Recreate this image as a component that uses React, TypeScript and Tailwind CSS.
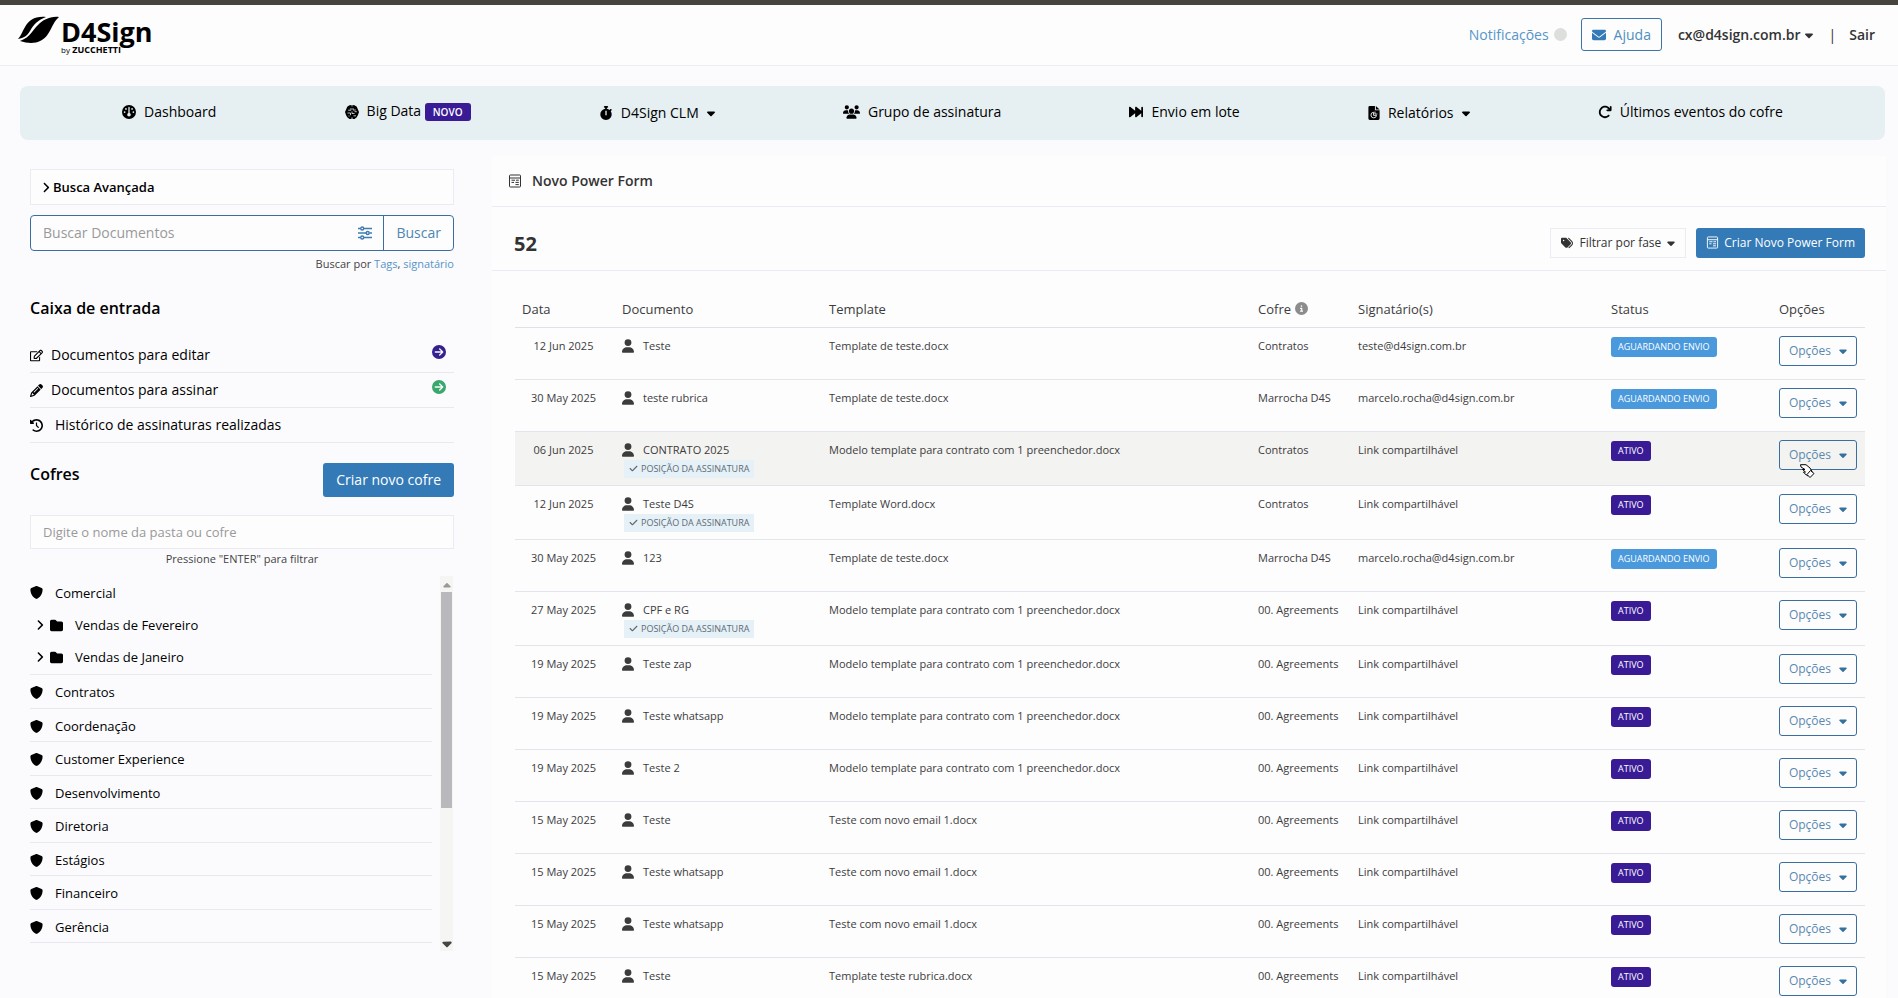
import { clsx } from "clsx";
import type { ReactNode } from "react";
import {
  FaAngleRight,
  FaArrowRotateRight,
  FaCaretDown,
  FaCheck,
  FaCircleArrowRight,
  FaCircleInfo,
  FaClockRotateLeft,
  FaEnvelope,
  FaFolder,
  FaForwardFast,
  FaGauge,
  FaPencil,
  FaShield,
  FaStopwatch,
  FaTags,
  FaUser,
  FaUsers,
} from "react-icons/fa6";
import { FaRegEdit } from "react-icons/fa";

type Row = {
  date: string;
  name: string;
  template: string;
  vault: string;
  signer: string;
  active: boolean;
  position?: boolean;
};

const MODEL = "Modelo template para contrato com 1 preenchedor.docx";
const LINK = "Link compartilhável";

const rows: Row[] = [
  { date: "12 Jun 2025", name: "Teste", template: "Template de teste.docx", vault: "Contratos", signer: "teste@d4sign.com.br", active: false },
  { date: "30 May 2025", name: "teste rubrica", template: "Template de teste.docx", vault: "Marrocha D4S", signer: "marcelo.rocha@d4sign.com.br", active: false },
  { date: "06 Jun 2025", name: "CONTRATO 2025", template: MODEL, vault: "Contratos", signer: LINK, active: true, position: true },
  { date: "12 Jun 2025", name: "Teste D4S", template: "Template Word.docx", vault: "Contratos", signer: LINK, active: true, position: true },
  { date: "30 May 2025", name: "123", template: "Template de teste.docx", vault: "Marrocha D4S", signer: "marcelo.rocha@d4sign.com.br", active: false },
  { date: "27 May 2025", name: "CPF e RG", template: MODEL, vault: "00. Agreements", signer: LINK, active: true, position: true },
  { date: "19 May 2025", name: "Teste zap", template: MODEL, vault: "00. Agreements", signer: LINK, active: true },
  { date: "19 May 2025", name: "Teste whatsapp", template: MODEL, vault: "00. Agreements", signer: LINK, active: true },
  { date: "19 May 2025", name: "Teste 2", template: MODEL, vault: "00. Agreements", signer: LINK, active: true },
  { date: "15 May 2025", name: "Teste", template: "Teste com novo email 1.docx", vault: "00. Agreements", signer: LINK, active: true },
  { date: "15 May 2025", name: "Teste whatsapp", template: "Teste com novo email 1.docx", vault: "00. Agreements", signer: LINK, active: true },
  { date: "15 May 2025", name: "Teste whatsapp", template: "Teste com novo email 1.docx", vault: "00. Agreements", signer: LINK, active: true },
  { date: "15 May 2025", name: "Teste", template: "Template teste rubrica.docx", vault: "00. Agreements", signer: LINK, active: true },
];

const vaults = [
  "Contratos",
  "Coordenação",
  "Customer Experience",
  "Desenvolvimento",
  "Diretoria",
  "Estágios",
  "Financeiro",
  "Gerência",
];

function FormIcon({ className }: { className?: string }) {
  return (
    <svg viewBox="0 0 14 14" fill="none" stroke="currentColor" className={className}>
      <rect x="1.5" y="1" width="11" height="12" rx="0.8" />
      <path d="M1.5 4H12.5M3.5 6.2H7M8 6.2H10.8M3.5 8.4H6M7.5 8.4H10.8M7.5 10.6H10.8" />
    </svg>
  );
}

function ReportIcon({ className }: { className?: string }) {
  return (
    <svg viewBox="0 0 12 15" className={className}>
      <path
        fill="currentColor"
        d="M1.5 0H7v4.5h5v9a1.5 1.5 0 0 1-1.5 1.5h-9A1.5 1.5 0 0 1 0 13.500v-12A1.5 1.5 0 0 1 1.500 0ZM8 0l4 3.700H8Z"
      />
      <path d="M5.5 6.7a3 3 0 1 0 3.2 3.3H5.5Z" fill="none" stroke="#e6eff1" />
      <path d="M7 6v2.6h2.6" fill="none" stroke="#e6eff1" />
    </svg>
  );
}

function BrainIcon({ className }: { className?: string }) {
  return (
    <svg viewBox="0 0 14 14" className={className}>
      <path
        fill="currentColor"
        d="M4.5 0.2L6.600 0V1.500H7.400V0L9.500 0.200L11.800 1.700L12.700 4L14 7L12.900 10.200L11.500 12.500L9.500 13.900H7.500V12.500H6.500V13.900H4.500L2.500 12.500L1.100 10.200L0 7L1.300 4L2.200 1.700Z"
      />
      <path
        fill="none"
        stroke="#e6eff1"
        strokeWidth="0.8"
        d="M3.200 5.200H6V3M8 3V5H10.800M2.500 8H5.500V10.200M7 6.500V8.500H9.500M8.500 10.800H11M3.500 11H4.500M9.500 6.700H11.800"
      />
    </svg>
  );
}

function Logo() {
  return (
    <a href="#" className="flex items-start gap-[2px] text-black">
      <svg viewBox="0 0 41 28" className="w-[41px] h-7" fill="currentColor">
        <path d="M28 1C17 0 11 4 7 11C4 16 3 20 0 23C6 22 9 20 12 15C16 8 20 4 28 1Z" />
        <path d="M41 1C32 0 25 4 20 9C15 13 13 21 2 25C14 29 24 27 30 18C34 12 36 5 41 1Z" />
      </svg>
      <span className="flex flex-col font-bold">
        <span className="text-[27px] leading-8">D4Sign</span>
        <span className="text-[9px] leading-[4px]">
          <span className="font-normal text-[8px]">by</span> ZUCCHETTI
        </span>
      </span>
    </a>
  );
}

function NavItem({ icon, dropdown, children }: { icon: ReactNode; dropdown?: boolean; children: ReactNode }) {
  return (
    <a
      href="#"
      className={clsx("flex items-center gap-2 text-black whitespace-nowrap", !dropdown && "pb-[3px]")}
    >
      {icon}
      {children}
      {dropdown && <FaCaretDown className="w-2" />}
    </a>
  );
}

function Header() {
  return (
    <header className="flex items-start justify-between h-[60px] border-t-[5px] border-b border-t-[#47443e] border-b-[#ebebf3] bg-[#fdfdfe] pl-[18px] pr-[23px] box-content">
      <div className="pt-[11px]">
        <Logo />
      </div>
      <div className="flex items-center pt-[13px] text-[#333]">
        <a href="#" className="text-[#5695c7]">
          Notificações
        </a>
        <span className="w-[13px] h-[13px] ml-[5px] mr-[14px] rounded-full bg-[#dcdfdc]" />
        <button className="flex items-center gap-2 h-[33px] px-[10px] rounded-[3px] border border-[#3b74a5] text-[#4f8fc0]">
          <FaEnvelope className="text-[#337ab7]" />
          Ajuda
        </button>
        <button className="flex items-center gap-1 ml-4 font-semibold">
          cx@d4sign.com.br
          <FaCaretDown className="w-2" />
        </button>
        <span className="ml-4 mr-[13px]">|</span>
        <a href="#" className="font-semibold">
          Sair
        </a>
      </div>
    </header>
  );
}

function Nav() {
  return (
    <nav className="flex justify-around items-center mt-5 ml-5 mr-[13px] px-[38px] h-[54px] rounded-lg bg-[#e6eff1]">
      <NavItem icon={<FaGauge />}>Dashboard</NavItem>
      <NavItem icon={<BrainIcon className="w-[14px] h-[14px]" />}>
        <span>
          Big Data{" "}
          <span className="px-2 py-[2px] rounded-[3px] bg-[#3a1b96] text-white text-[10px] font-semibold">NOVO</span>
        </span>
      </NavItem>
      <NavItem icon={<FaStopwatch />} dropdown>
        D4Sign CLM
      </NavItem>
      <NavItem icon={<FaUsers className="w-[17px] h-[14px]" />}>Grupo de assinatura</NavItem>
      <NavItem icon={<FaForwardFast />}>Envio em lote</NavItem>
      <NavItem icon={<ReportIcon className="w-3 h-[14px]" />} dropdown>
        Relatórios
      </NavItem>
      <NavItem icon={<FaArrowRotateRight />}>Últimos eventos do cofre</NavItem>
    </nav>
  );
}

function VaultItem({ name }: { name: string }) {
  return (
    <a href="#" className="flex items-center gap-3 pt-2 pb-[5px] border-b border-[#e8e8ee] leading-normal">
      <FaShield className="text-[13px]" />
      {name}
    </a>
  );
}

function FolderItem({ name }: { name: string }) {
  return (
    <a href="#" className="flex items-center h-8 pl-[6px]">
      <FaAngleRight className="text-[14px] w-2" />
      <FaFolder className="ml-[6px] mr-3 text-[13px]" />
      {name}
    </a>
  );
}

function Sidebar() {
  return (
    <aside className="w-[424px] shrink-0 text-black">
      <button className="flex items-center w-full h-[36px] px-[11px] gap-[3px] border border-[#ebebf3] bg-[#fdfdfe] text-[13px] font-semibold">
        <FaAngleRight className="w-2 text-[15px]" />
        Busca Avançada
      </button>
      <div className="flex h-9 mt-[10px] rounded-[4px] border border-[#3b6ea0] bg-[#fdfdfe]">
        <input
          aria-label="Buscar Documentos"
          placeholder="Buscar Documentos"
          className="flex-1 min-w-0 px-3 outline-none placeholder:text-[#999]"
        />
        <button aria-label="Filtros" className="px-[11px] text-[#3f7db0]">
          <svg viewBox="0 0 14 14" className="w-[14px] h-[14px]" fill="none" stroke="currentColor" strokeWidth="1.4">
            <path d="M0 2.5H2.5M6 2.5H14M0 7H8M11.5 7H14M0 11.5H2.5M6 11.5H14" />
            <circle cx="4.2" cy="2.5" r="1.5" />
            <circle cx="9.7" cy="7" r="1.5" />
            <circle cx="4.2" cy="11.5" r="1.5" />
          </svg>
        </button>
        <button className="px-3 border-l border-[#3b6ea0] text-[#4f86b0]">Buscar</button>
      </div>
      <p className="mt-1 text-right text-[11px] text-[#444] leading-[18px]">
        Buscar por{" "}
        <a href="#" className="text-[#5695c7]">
          Tags
        </a>
        ,{" "}
        <a href="#" className="text-[#5695c7]">
          signatário
        </a>
      </p>

      <h2 className="mt-[25px] mb-5 text-[16px] leading-5 font-semibold">Caixa de entrada</h2>
      <a href="#" className="flex items-center gap-2 h-[35px] border-b border-[#e8e8ee]">
        <FaRegEdit className="text-[13px]" />
        Documentos para editar
        <FaCircleArrowRight className="ml-auto mr-2 mb-[6px] text-[#35208f]" />
      </a>
      <a href="#" className="flex items-center gap-2 h-[35px] border-b border-[#e8e8ee]">
        <FaPencil className="text-[13px]" />
        Documentos para assinar
        <FaCircleArrowRight className="ml-auto mr-2 mb-[6px] text-[#3aa76d]" />
      </a>
      <a href="#" className="flex items-center gap-3 h-[35px] border-b border-[#e8e8ee]">
        <FaClockRotateLeft className="text-[13px]" />
        Histórico de assinaturas realizadas
      </a>

      <div className="flex justify-between items-start mt-5">
        <h2 className="text-[16px] leading-[22px] font-semibold">Cofres</h2>
        <button className="h-[34px] px-[13px] rounded-[3px] bg-[#337ab7] text-white">Criar novo cofre</button>
      </div>
      <input
        aria-label="Digite o nome da pasta ou cofre"
        placeholder="Digite o nome da pasta ou cofre"
        className="w-full h-[34px] mt-[18px] px-3 border border-[#ebebf3] bg-[#fdfdfe] text-[13px] outline-none placeholder:text-[#999]"
      />
      <p className="text-center text-[11px] leading-5 text-[#444]">Pressione "ENTER" para filtrar</p>

      <div className="flex mt-[7px] text-[13px]">
        <div className="flex-1 mr-2 pb-2">
          <a href="#" className="flex items-center gap-3 h-[33px]">
            <FaShield className="text-[13px]" />
            Comercial
          </a>
          <div className="pb-[1px] border-b border-[#e8e8ee]">
            <FolderItem name="Vendas de Fevereiro" />
            <FolderItem name="Vendas de Janeiro" />
          </div>
          {vaults.map((name) => (
            <VaultItem key={name} name={name} />
          ))}
        </div>
        <div className="flex flex-col items-center w-[13px] mr-[1px] bg-[#f5f5f3] text-[10px]">
          <FaCaretDown className="mt-1 rotate-180 h-3 text-[#999]" />
          <div className="w-[11px] h-[216px] bg-[#b8b8bd]" />
          <FaCaretDown className="mt-auto h-[15px] text-[#444]" />
        </div>
      </div>
    </aside>
  );
}

function FormTable() {
  return (
    <table className="w-full table-fixed text-[11px] text-[#3c3c3c]">
      <thead>
        <tr className="h-9 border-b border-[#e0e0e8] text-left text-[13px]">
          <th className="w-[99px] px-[7px] font-normal">Data</th>
          <th className="w-[207px] px-2 font-normal">Documento</th>
          <th className="px-2 font-normal">Template</th>
          <th className="w-[100px] px-2 font-normal">
            <span className="flex items-center gap-1">
              Cofre <FaCircleInfo className="text-[#8c8c8c]" />
            </span>
          </th>
          <th className="w-[253px] px-2 font-normal">Signatário(s)</th>
          <th className="w-[168px] px-2 font-normal">Status</th>
          <th className="w-[94px] px-2 font-normal">Opções</th>
        </tr>
      </thead>
      <tbody>
        {rows.map((row, index) => (
          <tr
            key={index}
            className={clsx(
              "border-b border-[#e4e4ec] align-top leading-5",
              row.position ? "h-[54px]" : "h-[52px]",
              index === 2 && "bg-[#f3f3f1]"
            )}
          >
            <td className="pl-[7px] pr-[9px] pt-2 text-center">{row.date}</td>
            <td className="px-2 pt-2">
              <span className="flex items-center gap-[9px]">
                <FaUser className="w-3 h-[14px]" />
                {row.name}
              </span>
              {row.position && (
                <span className="flex items-center w-max h-[18px] ml-[2px] px-[5px] gap-[3px] bg-[#e6f0f7] text-[9px] font-medium text-[#5b6a75]">
                  <FaCheck /> POSIÇÃO DA ASSINATURA
                </span>
              )}
            </td>
            <td className="px-2 pt-2">{row.template}</td>
            <td className="px-2 pt-2 whitespace-nowrap">{row.vault}</td>
            <td className="px-2 pt-2">{row.signer}</td>
            <td className="px-2 pt-2">
              <span
                className={clsx(
                  "inline-block h-5 px-[7px] rounded-[3px] text-[9px] font-medium text-white",
                  row.active ? "bg-[#3a1b96]" : "bg-[#4a99dd]"
                )}
              >
                {row.active ? "ATIVO" : "AGUARDANDO ENVIO"}
              </span>
            </td>
            <td className="px-2 pt-2">
              <div className="relative">
                <button className="flex items-center justify-center gap-2 w-full h-[30px] rounded-[3px] border border-[#3b6ea0] text-[12px] text-[#5a89b0]">
                  Opções
                  <FaCaretDown className="w-2 text-[#35719f]" />
                </button>
                {index === 2 && <HandCursor />}
              </div>
            </td>
          </tr>
        ))}
      </tbody>
    </table>
  );
}

function HandCursor() {
  return (
    <svg viewBox="0 0 16 14" className="absolute left-5 top-[24px] w-4 h-[14px]" fill="#fff" stroke="#000">
      <path d="M1.5 .7H7L11 4L13 7.5L9 12L5.5 9.5L4.5 8H6.5L3.5 5.5H6L2 3Z" />
      <path d="M11.5 6.5L15 9.5L11 13.5L8 10.5Z" />
    </svg>
  );
}

function Main() {
  return (
    <main className="flex-1 min-w-0 bg-[#fdfdfe] text-[#333]">
      <div className="flex items-center gap-[10px] h-[51px] px-4 border-b border-[#ebebf3]">
        <FormIcon className="w-[14px] h-[14px]" />
        <h1 className="font-semibold">Novo Power Form</h1>
      </div>
      <div className="flex items-center h-16 pt-2 pl-[22px] pr-[21px] border-b border-[#ebebf3] text-[12px]">
        <span className="mr-auto mt-[2px] text-[20px] font-bold">52</span>
        <button className="flex items-center h-[30px] px-[10px] gap-[6px] mr-[10px] border border-[#ebebf3]">
          <FaTags />
          Filtrar por fase
          <FaCaretDown className="w-2" />
        </button>
        <button className="flex items-center h-[30px] px-[10px] gap-[5px] rounded-[3px] bg-[#337ab7] text-white">
          <FormIcon className="w-[13px] h-[13px]" />
          Criar Novo Power Form
        </button>
      </div>
      <div className="pt-5 pl-[23px] pr-[21px]">
        <FormTable />
      </div>
    </main>
  );
}

export default function App() {
  return (
    <div className="h-screen overflow-hidden bg-[#fbfbfd] text-[14px] leading-5 font-['Open_Sans',sans-serif]">
      <Header />
      <Nav />
      <div className="flex items-start gap-[38px] mt-4 pl-[30px] pr-3">
        <div className="pt-[13px]">
          <Sidebar />
        </div>
        <Main />
      </div>
    </div>
  );
}
